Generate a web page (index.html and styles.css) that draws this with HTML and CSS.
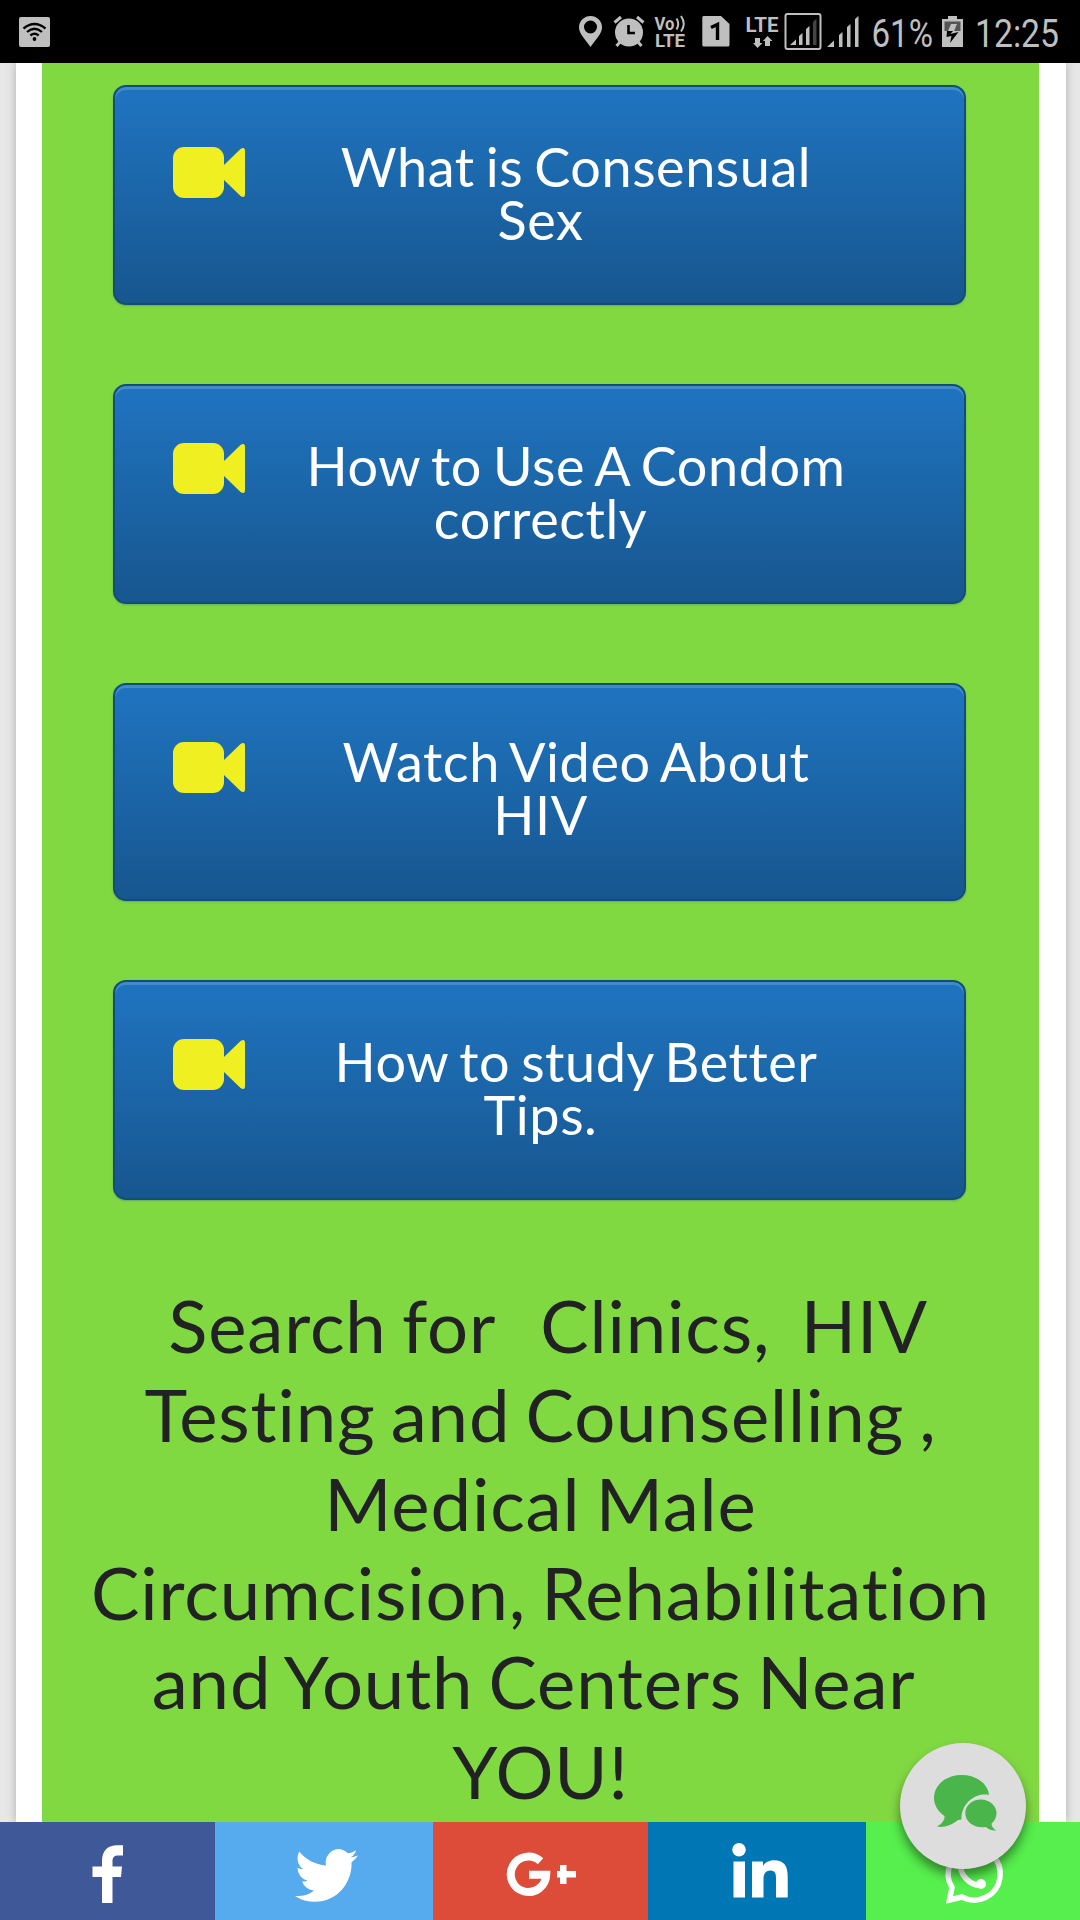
FILE: index.html
```html
<!DOCTYPE html>
<html lang="en">
<head>
<meta charset="utf-8">
<title>Youth health videos</title>
<link rel="stylesheet" href="styles.css">
</head>
<body>
<svg class="symbols" width="0" height="0">
  <symbol id="camera" viewBox="0 0 72 51">
    <rect width="51" height="51" rx="11"/>
    <path d="M51 18 67.500 2Q72-.5 72 4V47Q72 51.500 67.500 49L51 33Z"/>
  </symbol>
</svg>

<header class="status">
  <svg class="status-wifi" viewBox="0 0 31 30">
    <rect width="31" height="30" rx="2" fill="#bfbfbf"/>
    <g fill="none" stroke="#000" stroke-width="2.300"><path d="M4.500 11.500Q15.500 2.500 26.500 11.500"/><path d="M8 15Q15.500 8.500 23 15"/><path d="M11.300 18.500Q15.500 15 19.700 18.500"/></g>
    <circle cx="15.500" cy="22" r="1.900"/>
  </svg>
  <div class="status-right">
    <svg width="38" height="63" viewBox="570 0 38 63"><path fill-rule="evenodd" d="M590.500 47C586 40 579 34 579 27.500A11.500 11.500 0 0 1 602 27.500C602 34 595 40 590.500 47ZM590.500 20.500A6.500 6.500 0 1 0 590.500 33.500A6.500 6.500 0 1 0 590.500 20.500Z"/></svg>
    <svg width="42" height="63" viewBox="608 0 42 63"><circle cx="629" cy="32.500" r="14"/><path class="line" stroke-width="3" d="M614.500 22.500 621 17M643.500 22.500 637 17M620 42 616.500 46M638 42 641.500 46"/><path d="M628.500 25V33H635" fill="none" stroke="#000" stroke-width="2.600"/></svg>
    <svg width="44" height="63" viewBox="650 0 44 63"><text class="tiny" x="654.500" y="30" textLength="20" lengthAdjust="spacingAndGlyphs">Vo</text><path class="line" stroke-width="2" d="M676.500 18.500Q680 24 676.500 29.500M681 16Q686.500 24 681 31.500"/><text class="tiny" x="655" y="46.500" textLength="30" lengthAdjust="spacingAndGlyphs">LTE</text></svg>
    <svg width="44" height="63" viewBox="694 0 44 63"><path d="M703.500 16H721L729.500 24V45Q729.500 46.500 728 46.500H704Q702.300 46.500 702.300 45V17.500Q702.300 16 703.500 16Z"/><path d="M711 27.500 717.500 24.500V40" fill="none" stroke="#000" stroke-width="3.400"/></svg>
    <svg width="44" height="63" viewBox="738 0 44 63"><text class="tiny lte" x="745.500" y="31.500" textLength="33" lengthAdjust="spacingAndGlyphs">LTE</text><path d="M755 38H760V43H762.500L757.500 48 753 43H755ZM765 46H770V41H772.500L767.500 36 763 41H765Z"/></svg>
    <svg width="42" height="63" viewBox="782 0 42 63"><rect class="line" x="785.500" y="14" width="35" height="35" rx="2" stroke-width="2"/><path d="M790 45 796 39.500V45ZM799 36 802.500 33V45H799ZM806 29 809.500 26V45H806Z"/><path fill="#444" d="M813 22 816.500 18.500V45H813Z"/></svg>
    <svg width="42" height="63" viewBox="824 0 42 63"><path d="M827 47 834 40.500V47ZM839 35 842.500 32V47H839ZM847 27 850.500 24V47H847ZM855 19 858.500 16V47H855Z"/></svg>
    <svg width="70" height="63" viewBox="866 0 70 63"><text class="figures" x="871.500" y="47" textLength="61.500" lengthAdjust="spacingAndGlyphs">61%</text></svg>
    <svg width="34" height="63" viewBox="936 0 34 63"><path d="M948 16H957V19H963V47H942V19H948Z"/><path fill="#555" d="M944.500 21.500H960.500V31H944.500Z"/><path d="M951 24H957L954 31H948Z"/><path fill="#000" d="M947 31H953L950.500 34 958.500 32 950 43 951.500 36 946.500 37Z"/></svg>
    <svg width="110" height="63" viewBox="970 0 110 63"><text class="figures" x="975" y="47" textLength="84" lengthAdjust="spacingAndGlyphs">12:25</text></svg>
  </div>
</header>

<main class="sheet">
  <section class="panel">
    <nav class="videos">
      <a class="video video-first"><svg class="camera"><use href="#camera"/></svg><span class="label">What is Consensual<br>Sex</span></a>
      <a class="video"><svg class="camera"><use href="#camera"/></svg><span class="label">How to Use A Condom<br>correctly</span></a>
      <a class="video video-short"><svg class="camera"><use href="#camera"/></svg><span class="label">Watch Video About<br>HIV</span></a>
      <a class="video"><svg class="camera"><use href="#camera"/></svg><span class="label">How to study Better<br>Tips.</span></a>
    </nav>
    <h2 class="search">&nbsp;Search for &nbsp; Clinics,&nbsp; HIV<br>Testing and Counselling ,<br>Medical Male<br>Circumcision, Rehabilitation<br>and Youth Centers Near&nbsp;<br>YOU!</h2>
  </section>
</main>

<footer class="share">
  <a class="facebook"><svg width="32" height="58" viewBox="0 0 32 58"><path d="M10 58V32H.5V21.500H10V16C10 5 16.500.2 25 .2H31V10.500H26.500C22 10.500 20.500 12.500 20.500 16V21.500H30L29 32H20.500V58Z"/></svg></a>
  <a class="twitter"><svg width="63" height="53" viewBox="0 2.200 24 19.600" preserveAspectRatio="none"><path d="M23.953 4.570a10 10 0 01-2.825.775 4.958 4.958 0 002.163-2.723c-.951.555-2.005.959-3.127 1.184a4.920 4.920 0 00-8.384 4.482C7.690 8.095 4.067 6.130 1.640 3.162a4.822 4.822 0 00-.666 2.475c0 1.710.87 3.213 2.188 4.096a4.904 4.904 0 01-2.228-.616v.06a4.923 4.923 0 003.946 4.827 4.996 4.996 0 01-2.212.085 4.936 4.936 0 004.604 3.417 9.867 9.867 0 01-6.102 2.105c-.39 0-.779-.023-1.170-.067a13.995 13.995 0 007.557 2.209c9.053 0 13.998-7.496 13.998-13.985 0-.21 0-.42-.015-.63A9.935 9.935 0 0024 4.590z"/></svg></a>
  <a class="google"><svg width="70" height="44" viewBox="0 0 70 44"><path d="M33.500 9.300A17.700 17.700 0 1 0 39.200 22.700H22" fill="none" stroke="#fff" stroke-width="8"/><path d="M53 13H59.500V19H69V25.500H59.500V32H53V25.500H50V19H53Z"/></svg></a>
  <a class="linkedin"><svg width="56" height="55" viewBox="0 0 56 55"><circle cx="7" cy="6.800" r="6.800"/><path d="M1.500 18.500H13V54.500H1.500ZM20 18.500H31V23C33 19.500 37 17.300 42 17.300C53 17.300 55.700 24 55.700 34V54.500H44V36.500C44 31 43.500 27.500 38.500 27.500C33 27.500 31.500 31.500 31.500 36.500V54.500H20Z"/></svg></a>
  <a class="whatsapp"><svg width="58" height="58" viewBox="0 0 58 58"><path d="M5.500 54 8 41.500A26 26 0 1 1 18 51Z" fill="none" stroke="#fff" stroke-width="5.500"/><path d="M17 15C14 29 27 41 39 39" fill="none" stroke="#fff" stroke-width="5.500"/><circle cx="37" cy="38" r="5"/></svg></a>
</footer>

<a class="chat"><svg width="63" height="56" viewBox="0 0 63 56"><path d="M27.500 0C43 0 54 9 55 20C42 17 27 28 27.500 44.500L24 45C18 50 10 53 3 51.500C8 49 11 45 10.500 41C4 36.500 0 30 0 23C0 10 12 0 27.500 0Z"/><path d="M47 24.500C56 24.500 62.500 31 62.500 38C62.500 42.500 60.500 46 57.500 48.500C57.500 51.500 59.500 54 62.500 55.500C58 56 54.500 54.500 52 52C40 53.500 31.300 47 31.300 38C31.300 30.500 38 24.500 47 24.500Z"/></svg></a>
</body>
</html>
```
FILE: styles.css
```css
* { box-sizing: border-box; }

body {
  margin: 0;
  width: 1080px;
  height: 1920px;
  overflow: hidden;
  display: flex;
  flex-direction: column;
  background: #e7e7e7;
  font-family: Lato, sans-serif;
  font-variant-ligatures: none;
}

.symbols { position: absolute; }
svg { display: block; overflow: visible; }

.status {
  flex: 0 0 63px;
  display: flex;
  justify-content: space-between;
  align-items: center;
  padding-left: 19px;
  background: #000;
  z-index: 1;
}
.status-wifi { width: 31px; height: 30px; }
.status-right { display: flex; fill: #bfbfbf; }
.status .line { fill: none; stroke: #bfbfbf; }
.figures { font: 39px Roboto, sans-serif; }
.tiny { font: bold 18px Roboto, sans-serif; }
.lte { font-size: 21px; }

.sheet {
  flex: 0 0 1759px;
  margin: 0 14px 0 16px;
  padding: 0 27px 0 26px;
  background: #fff;
  box-shadow: 0 0 9px rgba(0, 0, 0, .25);
}
.panel {
  height: 100%;
  padding: 22px 0 0;
  background: #81d942;
}
.videos {
  display: flex;
  flex-direction: column;
  gap: 79px;
  width: 853px;
  margin-left: 71px;
}
.video {
  display: grid;
  height: 220px;
  padding-top: 53px;
  border: 2px solid #124f74;
  border-radius: 13px;
  background: linear-gradient(#1f73be 5%, #17568f);
  box-shadow: inset 0 3px 0 #438acb, 0 1px 2px rgba(80, 120, 150, .5);
  color: #fff;
}
.video-short { height: 218px; padding-top: 51px; }
.camera {
  grid-area: 1 / 1;
  width: 72px;
  height: 51px;
  margin: 4px 0 0 58px;
  fill: #efef22;
}
.video-first .camera { margin-top: 7px; }
.video-short .camera { margin-top: 6px; }
.label {
  grid-area: 1 / 1;
  padding-left: 2px;
  font-size: 54px;
  line-height: 53px;
  letter-spacing: .55px;
  word-spacing: -3.300px;
  text-align: center;
  text-indent: 71px;
}
.video-short .label { line-height: 52.500px; }

.search {
  margin: 79.500px 0 0;
  font-size: 72.500px;
  font-weight: 400;
  line-height: 89.200px;
  letter-spacing: .85px;
  word-spacing: -4.200px;
  text-align: center;
  color: #222;
  white-space: nowrap;
}

.share {
  flex: 0 0 98px;
  display: grid;
  grid-template-columns: 215px 218px 215px 218px 214px;
  fill: #fff;
  z-index: 1;
}
.share a { display: flex; justify-content: center; align-items: flex-start; }
.facebook { padding-top: 23px; background: #3e5898; }
.twitter { padding: 27px 0 0 4px; background: #56abee; }
.google { padding: 30px 0 0 2px; background: #dd4b39; }
.linkedin { padding: 21px 0 0 5px; background: #0077b5; }
.whatsapp { padding: 24px 0 0; background: #56ef4d; }

.chat {
  position: absolute;
  z-index: 2;
  left: 900px;
  top: 1743px;
  width: 126px;
  height: 126px;
  padding: 32px 0 0 34px;
  border-radius: 50%;
  background: #ddd;
  box-shadow: 0 7px 11px rgba(0, 0, 0, .45);
  fill: #4ab54b;
}
```
